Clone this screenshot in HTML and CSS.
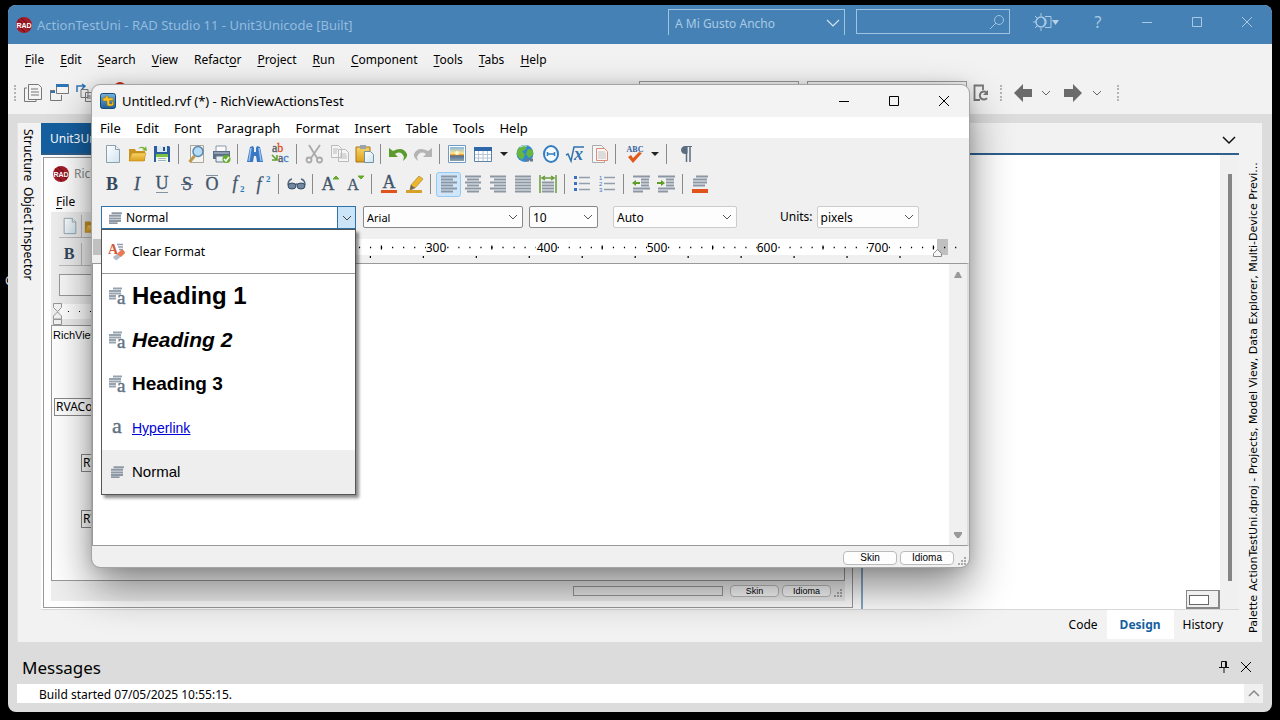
FILE: index.html
```html
<!DOCTYPE html>
<html lang="en">
<head>
<meta charset="utf-8">
<title>ActionTestUni - RAD Studio 11</title>
<link rel="stylesheet" href="styles.css">
</head>
<body>
<svg class="defs" aria-hidden="true">
  <defs>
    <linearGradient id="gPage" x1="0" y1="0" x2="1" y2="1"><stop offset="0" stop-color="#fff"/><stop offset="1" stop-color="#cfe3ee"/></linearGradient>
    <linearGradient id="gGold" x1="0" y1="0" x2="0" y2="1"><stop offset="0" stop-color="#f8d468"/><stop offset="1" stop-color="#dca01c"/></linearGradient>
    <linearGradient id="gSky" x1="0" y1="0" x2="0" y2="1"><stop offset="0" stop-color="#86b7e6"/><stop offset=".45" stop-color="#f8e58c"/><stop offset=".58" stop-color="#f08a1c"/><stop offset=".62" stop-color="#56708a"/><stop offset="1" stop-color="#8fa3b5"/></linearGradient>
    <linearGradient id="gBlue" x1="0" y1="0" x2="0" y2="1"><stop offset="0" stop-color="#74b3e0"/><stop offset="1" stop-color="#1c5f97"/></linearGradient>
    <symbol id="chev" viewBox="0 0 10 10"><path d="M1 3l4 4 4-4" fill="none" stroke="currentColor"/></symbol>
    <symbol id="min" viewBox="0 0 12 12"><path d="M1 6.500h10" stroke="currentColor"/></symbol>
    <symbol id="max" viewBox="0 0 12 12"><path d="M1.500 1.500h9v9h-9z" fill="none" stroke="currentColor"/></symbol>
    <symbol id="close" viewBox="0 0 12 12"><path d="M1 1l10 10M11 1L1 11" fill="none" stroke="currentColor"/></symbol>
    <symbol id="rad" viewBox="0 0 16 16"><circle cx="8" cy="8" r="8" fill="#a51c28"/><path d="M2 3l12 10M5 1l10 9M1 8l8 7" stroke="#5c1018"/><text x="8" y="10.500" text-anchor="middle" font-family="Liberation Sans" font-weight="bold" font-size="7" fill="#fff">RAD</text></symbol>
    <symbol id="page" viewBox="0 0 20 20"><path d="M3.500 1.500h9l4 4v13h-13z" fill="url(#gPage)" stroke="#8ba0ad"/><path d="M12.500 1.500v4h4" fill="#eef6fa" stroke="#8ba0ad"/></symbol>
    <symbol id="open" viewBox="0 0 20 20"><path d="M1 17V5h6l1 2h9v10z" fill="#c99320"/><path d="M1 17l3-8h14l-2 8z" fill="url(#gGold)" stroke="#c58e1c" stroke-width=".6"/><path d="M10 5q3-4 7-1l1-2 1 5-5-1 2-1q-3-2-6 0z" fill="#75b02c"/></symbol>
    <symbol id="lines" viewBox="0 0 16 14"><path d="M4 1.500h12M1 4.500h14M1 7.500h14M1 10.500h14M1 13h10" stroke="#8f99a6" stroke-width="2.300"/></symbol>
    <symbol id="para-a" viewBox="0 0 18 18"><path d="M5 1.500h9M1 4h12M1 6.500h12M1 9h7M1 11.500h7" stroke="#98a3b0" stroke-width="2"/><text x="9" y="17" font-family="Liberation Serif" font-size="19" font-weight="normal" font-style="normal" fill="#5d7183" stroke="#5d7183" stroke-width=".4">a</text></symbol>
    <symbol id="grip" viewBox="0 0 9 9"><path d="M6 0h2v2H6zM3 3h2v2H3zM6 3h2v2H6zM0 6h2v2H0zM3 6h2v2H3zM6 6h2v2H6z" fill="#aaa"/></symbol>
    <symbol id="tri" viewBox="0 0 10 10"><path d="M1 3h8L5 7z" fill="#222"/></symbol>
    <symbol id="bold" viewBox="0 0 20 20"><text x="9" y="16" text-anchor="middle" font-family="Liberation Serif" font-weight="bold" font-size="18" fill="#35485d">B</text></symbol>
  </defs>
</svg>
<span class="desktop-label">C</span>
<div class="ide">
  <header class="ide-title">
    <svg width="16" height="16"><use href="#rad"/></svg>
    <span class="caption">ActionTestUni - RAD Studio 11 - Unit3Unicode [Built]</span>
    <label class="pick layout-pick"><select aria-label="Desktop layout"><option>A Mi Gusto Ancho</option></select><svg width="16" height="16" viewBox="0 0 16 16"><path d="M2 5l6 6 6-6" fill="none" stroke="#d2e3f1" stroke-width="1.200"/></svg></label>
    <label class="pick ide-search"><input type="text" aria-label="Search"><svg width="16" height="16" viewBox="0 0 16 16"><circle cx="10" cy="6" r="4.500" fill="none" stroke="#9fc4e2"/><path d="M7 9L1 15" stroke="#9fc4e2"/></svg></label>
    <button class="theme" aria-label="Theme"><svg width="26" height="20" viewBox="0 0 26 20"><g fill="none" stroke="#a9cae4"><circle cx="8" cy="10" r="5" stroke-width="1.500"/><path d="M8 1v3M8 16v3M0 10h3M2 4l2 2M2 16l2-2M12 4.500h6v11h-6"/><path d="M9 5q6 5 0 10"/></g><path d="M19 8h7l-3.500 5z" fill="#b7d2e8"/></svg></button>
    <button class="help" aria-label="Help">?</button>
    <button aria-label="Minimize"><svg width="12" height="12"><use href="#min"/></svg></button>
    <button aria-label="Maximize"><svg width="12" height="12"><use href="#max"/></svg></button>
    <button aria-label="Close"><svg width="12" height="12"><use href="#close"/></svg></button>
  </header>
  <nav class="ide-menu">
    <button><u>F</u>ile</button><button><u>E</u>dit</button><button><u>S</u>earch</button><button><u>V</u>iew</button><button>Refact<u>o</u>r</button><button><u>P</u>roject</button><button><u>R</u>un</button><button><u>C</u>omponent</button><button><u>T</u>ools</button><button><u>T</u>abs</button><button><u>H</u>elp</button>
  </nav>
  <div class="ide-tools">
    <i class="handle"></i>
    <button aria-label="View unit"><svg width="20" height="20" viewBox="0 0 20 20"><g fill="#f4f4f4" stroke="#777"><path d="M4 5H1.500v13.500H13V16"/><path d="M5.500 1.500h10l3 3v12h-13z"/><path d="M8 6h7M8 9h8M8 12h8" /></g></svg></button>
    <button aria-label="View form"><svg width="20" height="20" viewBox="0 0 20 20"><path d="M7.500 1.500h12v9h-12z" fill="#f5f5f5" stroke="#777"/><path d="M7 1h12v3H7zM1 7h5v3H1z" fill="#2d75b6"/><path d="M6 7.500H1.500v10h11V12" fill="none" stroke="#777"/></svg></button>
    <button aria-label="Toggle form"><svg width="20" height="20" viewBox="0 0 20 20"><path d="M2 9V3h8M7 1l3 2-3 3" fill="none" stroke="#2d75b6" stroke-width="1.500"/><path d="M6 6.500h7v8H6zM10.500 9.500h7v9h-7z" fill="#eee" stroke="#777"/><path d="M12 13h4M12 15h4" stroke="#777"/></svg></button>
    <svg class="stop" width="12" height="12" viewBox="0 0 12 12"><circle cx="6" cy="6" r="6" fill="#c8281c"/></svg>
    <select class="target" aria-label="Platform"><option></option></select>
    <select class="target" aria-label="Device"><option></option></select>
    <button aria-label="Refresh devices"><svg width="20" height="20" viewBox="0 0 20 20"><path d="M10 17H4.500V2.500H13V7" fill="none" stroke="#777" stroke-width="1.800"/><path d="M17 10a4 4 0 1 0 0 5" fill="none" stroke="#777" stroke-width="2"/><path d="M18 7v5h-5z" fill="#777"/></svg></button>
    <i class="handle"></i>
    <button aria-label="Back"><svg width="20" height="20" viewBox="0 0 20 20"><path d="M1 10l9-9v5h9v8h-9v5z" fill="#6b6b6b"/></svg></button>
    <button class="slim" aria-label="Back history"><svg width="10" height="10"><use href="#chev"/></svg></button>
    <button class="wide" aria-label="Forward"><svg width="20" height="20" viewBox="0 0 20 20"><path d="M19 10l-9-9v5H1v8h9v5z" fill="#6b6b6b"/></svg></button>
    <button class="slimmer" aria-label="Forward history"><svg width="10" height="10"><use href="#chev"/></svg></button>
    <i class="handle"></i>
  </div>
  <main class="work">
    <aside class="rail left-rail"><span>Structure</span><span>Object Inspector</span></aside>
    <section class="center">
      <div class="file-tabs"><button class="file-tab">Unit3Unicode</button><button class="tab-list" aria-label="Open files"><svg width="14" height="10" viewBox="0 0 14 10"><path d="M1 2l6 6 6-6" fill="none" stroke="#111" stroke-width="1.500"/></svg></button></div>
      <div class="design-area">
        <div class="form">
          <div class="form-title"><svg width="16" height="16"><use href="#rad"/></svg><span>RichViewActionsTest</span></div>
          <div class="form-menu"><button><u>F</u>ile</button><button><u>E</u>dit</button></div>
          <div class="form-body">
            <div class="form-bar"><button aria-label="New"><svg width="18" height="18"><use href="#page"/></svg></button><button aria-label="Open"><svg width="18" height="18"><use href="#open"/></svg></button></div>
            <div class="form-bar"><button aria-label="Bold"><svg width="18" height="18"><use href="#bold"/></svg></button><button aria-label="Italic"></button></div>
            <input class="form-combo" type="text" aria-label="Style">
            <svg class="form-ruler" height="22" width="60" viewBox="0 0 60 22"><path d="M9 1h51v15H9z" fill="#fff"/><path d="M2.500.5h8v4l-4 4-4-4zM2.500 16v-3l4-4 4 4v3zM2.500 16.500h8v5h-8z" fill="#f4f4f4" stroke="#999"/><path d="M17 8h1v1h-1zM28 8h1v1h-1zM39 8h1v1h-1z"/></svg>
            <div class="form-editor"><p>RichViewEdit1</p><i class="comp-icon"></i><div class="comp first">RVAControlsPainter1</div><i class="comp-icon"></i><div class="comp">RVAPopupMenu</div><i class="comp-icon"></i><div class="comp">RVStyle1</div></div>
            <div class="form-status"><i class="progress"></i><button>Skin</button><button>Idioma</button><svg width="9" height="9"><use href="#grip"/></svg></div>
          </div>
        </div>
        <i class="guide"></i>
        <div class="blank"><button class="mini" aria-label="Form position"><i></i></button></div>
        <div class="scroller"><i></i></div>
      </div>
      <div class="view-tabs"><button>Code</button><button class="on">Design</button><button>History</button></div>
    </section>
    <aside class="rail right-rail"><span>Palette</span><span>ActionTestUni.dproj - Projects, Model View, Data Explorer, Multi-Device Previ...</span></aside>
  </main>
  <footer class="messages">
    <div class="msg-head"><h2>Messages</h2><button aria-label="Pin"><svg width="12" height="14" viewBox="0 0 12 14"><path d="M3.500 7.500v-6h5v6M7.500 1.500v6M1 7.500h10M6 8v5" fill="none" stroke="#111"/></svg></button><button aria-label="Close"><svg width="12" height="12"><use href="#close"/></svg></button></div>
    <div class="msg-list"><span>Build started 07/05/2025 10:55:15.</span><button aria-label="Scroll up"><svg width="12" height="10" viewBox="0 0 12 10"><path d="M1 7l5-5 5 5" fill="none" stroke="#888" stroke-width="1.500"/></svg></button></div>
  </footer>
</div>

<section class="dialog" aria-label="RichViewActionsTest">
  <header class="dlg-title">
    <svg width="16" height="16" viewBox="0 0 16 16"><rect x=".5" y=".5" width="15" height="15" rx="2" fill="url(#gBlue)" stroke="#174a74"/><path d="M3 5h2.500V3H8v2h5v2.500H9.500V11H12V8.500h1.500V12q-1 1-3 1H8.500Q7 13 7 11V8H3z" fill="#ffc31f" stroke="#9b6b10" stroke-width=".5"/></svg>
    <span>Untitled.rvf (*) - RichViewActionsTest</span>
    <button aria-label="Minimize"><svg width="12" height="12"><use href="#min"/></svg></button>
    <button aria-label="Maximize"><svg width="12" height="12"><use href="#max"/></svg></button>
    <button aria-label="Close"><svg width="12" height="12"><use href="#close"/></svg></button>
  </header>
  <nav class="dlg-menu"><button>File</button><button>Edit</button><button>Font</button><button>Paragraph</button><button>Format</button><button>Insert</button><button>Table</button><button>Tools</button><button>Help</button></nav>
  <div class="bar">
    <button aria-label="New"><svg viewBox="0 0 20 20"><use href="#page"/></svg></button>
    <button aria-label="Open"><svg viewBox="0 0 20 20"><use href="#open"/></svg></button>
    <button aria-label="Save"><svg viewBox="0 0 20 20"><path d="M1 2h15l1 1v15H1z" fill="#2c5da0"/><path d="M4 2h10v6H4z" fill="#d9e8f2"/><path d="M10 3h2v4h-2z" fill="#28537f"/><path d="M3 10h12v8H3z" fill="#f3fae9"/><path d="M3 10h12v3H3z" fill="#7dc142"/><path d="M5 14.500h8M5 16.500h8" stroke="#9bb3c4"/></svg></button>
    <i class="sep"></i>
    <button aria-label="Preview"><svg viewBox="0 0 20 20"><path d="M3.500 1.500h13v17h-13z" fill="#f3f3f0" stroke="#aaa79e"/><circle cx="11" cy="7.500" r="5" fill="#b4dcf6" stroke="#5c86ab" stroke-width="1.500"/><path d="M7.500 12l-5 6" stroke="#c09a4c" stroke-width="3"/></svg></button>
    <button aria-label="Print"><svg viewBox="0 0 20 20"><path d="M4 2h10v6H4z" fill="#fafafa" stroke="#8a98a6"/><path d="M1 7h17v8H1z" fill="#5a6e84"/><path d="M2 8h15v2H2z" fill="#8da0b3"/><path d="M4 12h10v6H4z" fill="#e8f0f6" stroke="#66788a"/><circle cx="14.500" cy="15" r="4" fill="#62ad2d"/><path d="M12 15l2 2 3-4" fill="none" stroke="#fff" stroke-width="1.500"/></svg></button>
    <i class="sep"></i>
    <button aria-label="Find"><svg viewBox="0 0 20 20"><path d="M4 3l3-1 1 2v4h2V4l1-2 3 1 3 15h-6l-1-6H8l-1 6H1z" fill="#3a78c4"/><path d="M5 4L3 17M13 4l2 13" stroke="#9cc4ee" stroke-width="1.500"/></svg></button>
    <button aria-label="Replace"><svg viewBox="0 0 20 20"><g font-family="Liberation Serif" font-size="12"><text x="1" y="8" fill="#4a5b6e" stroke="#4a5b6e" stroke-width=".3">a<tspan fill="#dc5020" stroke="#dc5020">b</tspan></text><text x="7" y="18" fill="#4a5b6e" stroke="#4a5b6e" stroke-width=".3">a<tspan fill="#3c7fd0" stroke="#3c7fd0">c</tspan></text></g><path d="M1 11l4 4M6 11v5H1" fill="none" stroke="#5c9c28" stroke-width="1.500"/></svg></button>
    <i class="sep"></i>
    <button aria-label="Cut"><svg viewBox="0 0 20 20"><g fill="none" stroke="#aaa" stroke-width="1.800"><path d="M4 1l8 13M15 1L6 14"/><circle cx="4" cy="16" r="2.500"/><circle cx="14.500" cy="16" r="2.500"/></g></svg></button>
    <button aria-label="Copy"><svg viewBox="0 0 20 20"><g fill="#f5f5f5" stroke="#bbb"><path d="M1.500 1.500h7l3 3v9h-10zM8.500 5.500h7l3 3v9h-10z"/><path d="M10 10h6M10 12h7M10 14h7M3 5h5M3 7h4M3 9h4"/></g></svg></button>
    <button aria-label="Paste"><svg viewBox="0 0 20 20"><path d="M1 3h14v15H1z" fill="url(#gGold)" stroke="#a87416"/><path d="M5 1h6v4H5z" fill="#99a4ae"/><path d="M9.500 7.500h6l3 3v8h-9z" fill="url(#gPage)" stroke="#6e93ac"/></svg></button>
    <i class="sep"></i>
    <button aria-label="Undo"><svg viewBox="0 0 20 20"><path d="M0 4v9h9l-3-3q6-4 9 3l-1 4q5-4 4-7-4-8-14-3z" fill="#5b9b2e"/></svg></button>
    <button aria-label="Redo"><svg viewBox="0 0 20 20"><path d="M18 4v9H9l3-3q-6-4-9 3l1 4q-5-4-4-7 4-8 14-3z" fill="#b4b4b4"/></svg></button>
    <i class="sep"></i>
    <button aria-label="Picture"><svg viewBox="0 0 20 20"><path d="M.5 1.500h17v17H.5z" fill="#fff" stroke="#6e9cc6"/><path d="M2 3h14v14H2z" fill="url(#gSky)"/><circle cx="9" cy="9" r="2" fill="#fff9d0"/></svg></button>
    <button aria-label="Table"><svg viewBox="0 0 20 20"><path d="M1.500 3.500h17v14h-17z" fill="#fff" stroke="#5c82a8"/><path d="M1 3h18v4H1z" fill="#2e67aa"/><path d="M2 10.500h16M2 14h16M5.500 7v10M10 7v10M14.500 7v10" stroke="#b4c6d8"/></svg></button>
    <button class="drop" aria-label="Table size"><svg viewBox="0 0 10 10"><use href="#tri"/></svg></button>
    <button aria-label="Hyperlink"><svg viewBox="0 0 20 20"><circle cx="10" cy="9.500" r="8.500" fill="#3189d4"/><path d="M4 4q4-4 8-2l-2 4-3 1 3 4-3 5Q1 13 2 7zM13 5l5 1v5l-4 3-3-4z" fill="#68b63c"/><path d="M5 3q4-2 7-1" stroke="#bfe4fa" fill="none"/><path d="M11 16h7" stroke="#6d7882" stroke-width="3" stroke-dasharray="3 1"/></svg></button>
    <button aria-label="Symbol"><svg viewBox="0 0 20 20"><ellipse cx="11" cy="10" rx="7" ry="8" fill="#f5fbff" stroke="#347dc3" stroke-width="2"/><path d="M7 10h8M7.500 8v4M14.500 8v4" stroke="#347dc3" stroke-width="1.500"/></svg></button>
    <button aria-label="Equation"><svg viewBox="0 0 20 20"><path d="M1 11l2-1 3 7L9 3h10" fill="none" stroke="#2e73b0" stroke-width="1.500"/><text x="9" y="16" font-family="Liberation Serif" font-style="italic" font-weight="bold" font-size="18" fill="#2e73b0">x</text></svg></button>
    <button aria-label="Page background"><svg viewBox="0 0 20 20"><path d="M2.500 1.500h9l3 3v14h-12z" fill="#f4f7f8" stroke="#aaa"/><path d="M6.500 4.500h8l3 3v9h-11z" fill="#fff6f3" stroke="#e08975"/><path d="M8 8h7M8 10h8M8 12h8M8 14h8" stroke="#b8c0c8"/></svg></button>
    <i class="sep"></i>
    <button aria-label="Spelling"><svg viewBox="0 0 20 20"><text x="11" y="8" text-anchor="middle" font-family="Liberation Serif" font-weight="bold" font-size="8" fill="#365f9e">ABC</text><path d="M4 13l3-2 2 3 6-6 3 1-9 10z" fill="#e05a1c"/></svg></button>
    <button class="drop" aria-label="Spelling options"><svg viewBox="0 0 10 10"><use href="#tri"/></svg></button>
    <i class="sep"></i>
    <button aria-label="Show marks"><svg viewBox="0 0 20 20"><path d="M17 2.500h-7a3.500 3.500 0 1 0 0 7h2V2.500" fill="#5a6c80" stroke="#5a6c80"/><path d="M11.500 2v16M15 2v16" stroke="#5a6c80" stroke-width="1.500"/></svg></button>
  </div>
  <div class="bar">
    <button aria-label="Bold"><svg viewBox="0 0 20 20"><use href="#bold"/></svg></button>
    <button aria-label="Italic"><svg viewBox="0 0 20 20"><text class="gl it" x="9" y="16">I</text></svg></button>
    <button aria-label="Underline"><svg viewBox="0 0 20 20"><text class="gl" x="9" y="15">U</text><path d="M3 18.500h12" stroke="#8391a0"/></svg></button>
    <button aria-label="Strikeout"><svg viewBox="0 0 20 20"><text class="gl" x="9" y="16">S</text><path d="M3 10.500h12" stroke="#5b6c7e"/></svg></button>
    <button aria-label="Overline"><svg viewBox="0 0 20 20"><text class="gl" x="9" y="16">O</text><path d="M3 1.500h12" stroke="#8391a0"/></svg></button>
    <button aria-label="Subscript"><svg viewBox="0 0 20 20"><text class="gl it" x="7" y="15">f</text><text class="idx" x="12" y="18">2</text></svg></button>
    <button aria-label="Superscript"><svg viewBox="0 0 20 20"><text class="gl it" x="6" y="16">f</text><text class="idx" x="13" y="8">2</text></svg></button>
    <i class="sep"></i>
    <button aria-label="Hidden text"><svg viewBox="0 0 20 20"><path d="M1 11q0-5 4-6M18 11q0-5-4-6M8 11q2-2 3 0" fill="none" stroke="#52657b" stroke-width="1.500"/><ellipse cx="5" cy="12" rx="4" ry="3" fill="#7187a2" stroke="#344964"/><ellipse cx="14" cy="12" rx="4" ry="3" fill="#7187a2" stroke="#344964"/></svg></button>
    <i class="sep"></i>
    <button aria-label="Grow font"><svg viewBox="0 0 20 20"><text class="gl" x="7" y="16">A</text><path d="M12 5l3-3 3 3z" fill="#67a92f" stroke="#67a92f"/></svg></button>
    <button aria-label="Shrink font"><svg viewBox="0 0 20 20"><text class="gl small" x="7" y="16">A</text><path d="M12 2l3 3 3-3z" fill="#67a92f" stroke="#67a92f"/></svg></button>
    <i class="sep"></i>
    <button aria-label="Text color"><svg viewBox="0 0 20 20"><text class="gl" x="9" y="14">A</text><path d="M1 16h16v3H1z" fill="#e0531c"/></svg></button>
    <button aria-label="Highlight"><svg viewBox="0 0 20 20"><path d="M6 11l8-9 4 3-8 9-5 2z" fill="#edb72c" stroke="#a88236" stroke-width=".7"/><path d="M6 11l4 3-5 2z" fill="#6a6660"/><path d="M1 16h16v3H1z" fill="#d5a12a"/></svg></button>
    <i class="sep"></i>
    <button class="pressed" aria-label="Align left"><svg viewBox="0 0 20 20"><path class="ln" d="M2 2.500h16M2 5.500h12M2 8.500h16M2 11.500h12M2 14.500h16M2 17.500h12"/></svg></button>
    <button aria-label="Center"><svg viewBox="0 0 20 20"><path class="ln" d="M1 2.500h16M3 5.500h12M1 8.500h16M3 11.500h12M1 14.500h16M3 17.500h12"/></svg></button>
    <button aria-label="Align right"><svg viewBox="0 0 20 20"><path class="ln" d="M1 2.500h16M5 5.500h12M1 8.500h16M5 11.500h12M1 14.500h16M5 17.500h12"/></svg></button>
    <button aria-label="Justify"><svg viewBox="0 0 20 20"><path class="ln" d="M1 2.500h16M1 5.500h16M1 8.500h16M1 11.500h16M1 14.500h16M1 17.500h16"/></svg></button>
    <button aria-label="Distribute"><svg viewBox="0 0 20 20"><path class="ln" d="M3 8.500h12M3 11.500h12M3 14.500h12M3 17.500h12"/><path d="M1 1v18M17 1v18M3 4h12M6 2L3 4l3 2M12 2l3 2-3 2" fill="none" stroke="#6a9c3c" stroke-width="1.500"/></svg></button>
    <i class="sep"></i>
    <button aria-label="Bullets"><svg viewBox="0 0 20 20"><path d="M1 2h3v3H1zM1 8h3v3H1zM1 14h3v3H1z" fill="#3b6fc4"/><path d="M6 3.500h11M6 9.500h11M6 15.500h11" stroke="#929eab" stroke-width="1.500"/></svg></button>
    <button aria-label="Numbering"><svg viewBox="0 0 20 20"><g font-family="Liberation Sans" font-size="6" fill="#3b6fc4"><text x="1" y="6">1</text><text x="1" y="12">2</text><text x="1" y="18">3</text></g><path d="M6 3.500h11M6 9.500h11M6 15.500h11" stroke="#929eab" stroke-width="1.500"/></svg></button>
    <i class="sep"></i>
    <button aria-label="Outdent"><svg viewBox="0 0 20 20"><path class="ln" d="M1 2.500h17M9 5.500h8M9 8.500h8M9 11.500h8M1 14.500h17M1 17.500h10"/><path d="M0 9l4-3v2h4v2H4v2z" fill="#5f9d27"/></svg></button>
    <button aria-label="Indent"><svg viewBox="0 0 20 20"><path class="ln" d="M1 2.500h17M9 5.500h8M9 8.500h8M9 11.500h8M1 14.500h17M1 17.500h10"/><path d="M8 9L4 6v2H0v2h4v2z" fill="#5f9d27"/></svg></button>
    <i class="sep"></i>
    <button aria-label="Paragraph color"><svg viewBox="0 0 20 20"><path class="ln" d="M5 2.500h12M2 5.500h14M2 8.500h14M2 11.500h12"/><path d="M1 15h16v4H1z" fill="#e0531c"/></svg></button>
  </div>
  <div class="combos">
    <div class="style-combo">
      <svg width="14" height="12"><use href="#lines"/></svg><input type="text" value="Normal" aria-label="Style"><button aria-label="Show styles"><svg width="10" height="10"><use href="#chev"/></svg></button>
      <div class="style-list">
        <button class="clear"><svg width="18" height="18" viewBox="0 0 18 18"><path d="M9 1.500h6M10 4h5M11 6.500h4" stroke="#929eaa" stroke-width="1.500"/><text x="0" y="11" font-family="Liberation Serif" font-weight="bold" font-size="14" fill="#d05c3c">A</text><path d="M5 14l8-6 4 2-8 7q-2 1-4-3z" fill="#b4bdca"/><path d="M9 11l4-4q3-1 4 3l-4 4z" fill="#eb7953"/></svg>Clear Format</button>
        <button class="h1"><svg width="18" height="18"><use href="#para-a"/></svg>Heading 1</button>
        <button class="h2"><svg width="18" height="18"><use href="#para-a"/></svg>Heading 2</button>
        <button class="h3"><svg width="18" height="18"><use href="#para-a"/></svg>Heading 3</button>
        <button class="lnk"><svg width="18" height="26" viewBox="0 0 18 26"><text x="4" y="18" font-family="Liberation Serif" font-size="22" fill="#5d7183" stroke="#5d7183" stroke-width=".4">a</text></svg><span>Hyperlink</span></button>
        <button class="nrm"><svg width="18" height="12"><use href="#lines"/></svg>Normal</button>
      </div>
    </div>
    <label class="pick font"><select aria-label="Font"><option>Arial</option></select><svg width="10" height="10"><use href="#chev"/></svg></label>
    <label class="pick size"><select aria-label="Font size"><option>10</option></select><svg width="10" height="10"><use href="#chev"/></svg></label>
    <label class="pick auto"><select aria-label="Color"><option>Auto</option></select><svg width="10" height="10"><use href="#chev"/></svg></label>
    <label class="units-label" for="units">Units:</label>
    <div class="pick units"><select id="units"><option>pixels</option></select><svg width="10" height="10"><use href="#chev"/></svg></div>
  </div>
  <svg class="ruler" height="24" width="876" viewBox="0 0 876 24">
    <path d="M9 0h836v16H9z" fill="#fff"/><path d="M1 0h8v16H1zM845 0h11v16h-11z" fill="#c0c0c0"/>
    <path d="M13 8.500h855" stroke="#000" stroke-width="1.500" stroke-dasharray="1.200 9.840"/>
    <path d="M68 8.500h778" stroke="#000" stroke-width="4" stroke-dasharray="1.200 109.200"/>
    <path d="M13 18h820" stroke="#000" stroke-width="2" stroke-dasharray="1.200 51.760"/>
    <path d="M334 2h20v13h-20zM444 2h20v13h-20zM555 2h20v13h-20zM665 2h20v13h-20zM776 2h20v13h-20z" fill="#fff"/>
    <g text-anchor="middle" font-family="Noto Sans" font-size="12"><text x="344" y="13">300</text><text x="455" y="13">400</text><text x="565" y="13">500</text><text x="675" y="13">600</text><text x="786" y="13">700</text></g>
    <path d="M841.500 17.500v-3l4-4 4 4v3z" fill="#f6f6f6" stroke="#888"/>
  </svg>
  <div class="editor"><textarea aria-label="Document"></textarea><div class="vscroll"><svg width="10" height="10" viewBox="0 0 10 10"><path d="M1 8h8L6 2H4z" fill="#999"/></svg><svg width="10" height="10" viewBox="0 0 10 10"><path d="M1 2h8v2L6 8H4L1 4z" fill="#999"/></svg></div></div>
  <footer class="status"><button>Skin</button><button>Idioma</button><svg width="9" height="9"><use href="#grip"/></svg></footer>
</section>
</body>
</html>
```
FILE: styles.css
```css
* { box-sizing: border-box; }
html, body { height: 100%; }
body { margin: 0; padding: 5px 8px 8px; background: #000; color: #000; font: 12px/16px "Noto Sans", sans-serif; overflow: hidden; position: relative; }
button, input, select, textarea { font: inherit; color: inherit; border: 0; padding: 0; margin: 0; background: none; border-radius: 0; outline: 0; }
select { appearance: none; }
svg { flex: none; display: block; }
.defs { position: absolute; width: 0; height: 0; }
.desktop-label { position: absolute; left: 5px; top: 273px; color: #ddd; }

.ide { position: relative; height: 100%; display: flex; flex-direction: column; background: #dcdcdc; border-radius: 8px; overflow: hidden; }
.ide-title { height: 39px; flex: none; display: flex; background: #4681b5; color: #a9cae4; padding: 4px 0 5px 8px; align-items: flex-start; }
.ide-title > svg { margin-top: 8px; }
.caption { flex: 1; margin: 8px 0 0 5px; font-size: 13px; color: #93bcdf; white-space: nowrap; }
.ide-title > button { width: 50px; height: 25px; display: grid; place-items: center; }
.ide-title .theme { width: 72px; }
.ide-title .help { width: 32px; margin-right: 8px; font-size: 16px; }
.pick { display: grid; }
.pick > * { grid-area: 1 / 1; }
.pick > svg { align-self: center; justify-self: end; margin-right: 4px; pointer-events: none; color: #555; }
.layout-pick { width: 177px; height: 26px; border: 1px solid #9fc4e2; border-bottom: 0; margin-right: 11px; }
.layout-pick select { padding: 2px 0 0 6px; }
.layout-pick > svg { margin-right: 3px; }
.ide-search { width: 154px; height: 25px; border: 1px solid #9fc4e2; }
.ide-search input { width: 100%; min-width: 0; }
.ide-menu { height: 32px; flex: none; background: #f2f2f2; display: flex; align-items: center; gap: 16px; padding-left: 17px; }
u { text-underline-offset: 2px; }
.ide-tools { height: 38px; flex: none; display: flex; align-items: center; background: #f2f2f2; padding: 0 153px 4px 5px; }
.ide-tools button { width: 26px; display: grid; place-items: center; color: #666; }
.ide-tools .slim { width: 20px; }
.ide-tools .wide { width: 34px; }
.ide-tools .slimmer { width: 14px; }
.handle { width: 3px; height: 16px; border: 1px dotted #b4b4b4; border-width: 0 2px 0 0; margin: 0 4px; }
.ide-tools > .handle:first-child { margin-left: 0; }
.stop { margin: 0 auto 10px 16px; }
.target { width: 160px; height: 24px; border: 1px solid #999; margin-right: 8px; }
.target + button { margin-left: -8px; }
.target + button + .handle { margin: 0 8px 0 6px; }
.ide-tools .slimmer + .handle { margin: 0 0 0 12px; }

.work { flex: 1; min-height: 0; display: flex; margin: 9px 9px 0; background: #f2f2f2; }
.rail { width: 24px; flex: none; writing-mode: vertical-rl; display: flex; align-items: flex-start; white-space: nowrap; }
.left-rail { gap: 6px; border-left: 1px solid #e3e3e3; padding: 6px 5px 0 0; }
.right-rail { transform: rotate(180deg); gap: 4px; padding: 9px 7px 0 0; border-left: 1px solid #ddd; font-family: "DejaVu Sans", sans-serif; font-size: 11px; }
.center { flex: 1; min-width: 0; display: flex; flex-direction: column; }
.file-tabs { height: 32px; flex: none; border-bottom: 2px solid #2f5f8c; display: flex; justify-content: space-between; }
.file-tab { width: 120px; background: #155f9f; color: #fff; text-align: left; padding: 2px 0 0 9px; }
.tab-list { padding: 4px 3px 0 0; }
.design-area { flex: 1; min-height: 0; display: flex; background: #fff; border-bottom: 1px solid #d8d8d8; }
.form { flex: 794; margin: 2px 8px 1px 2px; border: 1px solid #999; padding: 0 7px 6px; background: #fff; display: flex; flex-direction: column; min-height: 0; }
.form-title { height: 32px; display: flex; align-items: center; gap: 5px; padding-left: 2px; color: #888; }
.form-menu { height: 22px; display: flex; align-items: center; gap: 16px; padding: 2px 5px 0; }
.form-body { flex: 1; min-height: 0; background: #eee; display: flex; flex-direction: column; }
.form-bar { display: flex; height: 28px; padding: 3px 0 0 8px; }
.form-bar button { width: 23px; height: 23px; border: 1px solid #bbb; border-width: 0 1px 1px 0; display: grid; place-items: center; }
.form-combo { width: 200px; height: 22px; border: 1px solid #999; background: #f8f8f8; margin: 6px 0 7px 8px; flex: none; }
.form-editor { flex: 1; min-height: 0; border: 1px solid #999; background: #fff; }
.form-editor p { margin: 1px 1px 0; font: 11px/16px "Liberation Sans", sans-serif; }
.comp-icon { display: block; width: 28px; height: 34px; border: 1px solid #888; margin: 4px 0 0 39px; }
.form-editor p + .comp-icon { margin-top: 21px; }
.comp { width: max-content; height: 18px; border: 1px solid #888; margin-left: 29px; padding: 0 1px; }
.comp.first { margin-left: 2px; }
.form-status { height: 20px; flex: none; display: flex; align-items: center; justify-content: flex-end; gap: 3px; padding-right: 2px; }
.form-status button, .status button { border: 1px solid #bbb; border-radius: 4px; background: #fdfdfd; width: 49px; height: 12px; font: 9px/10px "Liberation Sans", sans-serif; }
.form-status svg { margin-top: 5px; }
.progress { width: 150px; height: 10px; border: 1px solid #999; margin-right: 4px; }
.guide { width: 2px; background: #85a8c8; }
.blank { flex: 357; display: flex; justify-content: flex-end; align-items: flex-end; }
.mini { width: 34px; height: 19px; background: #f0f0f0; border: 1px solid #888; border-width: 1px 2px 2px 1px; padding: 4px 2px; }
.mini i { display: block; width: 20px; height: 10px; background: #fff; border: 1px solid #666; }
.scroller { width: 19px; background: #f0f0f0; padding: 19px 7px 28px 8px; }
.scroller i { display: block; height: 100%; background: #858585; }
.view-tabs { height: 32px; flex: none; display: flex; justify-content: flex-end; align-items: flex-start; padding-right: 7px; }
.view-tabs button { height: 29px; padding: 0 9px; }
.view-tabs .on { width: 67px; padding: 0; background: #fff; color: #155f9f; font-weight: bold; }
.messages { padding: 0 9px 9px; flex: none; }
.msg-head { height: 42px; display: flex; align-items: center; gap: 10px; padding: 8px 11px 0 5px; }
.msg-head h2 { flex: 1; margin: 2px 0 0; font-size: 17px; font-weight: 400; }
.msg-list { height: 19px; background: #fff; display: flex; justify-content: space-between; align-items: center; padding-left: 22px; }
.msg-list span { padding-top: 2px; }
.msg-list button { width: 19px; height: 19px; background: #f0f0f0; display: grid; place-items: center; }

/* floating application window */
.dialog { position: absolute; left: 92px; right: 311px; top: 85px; bottom: 153px; display: flex; flex-direction: column; background: #f0f0f0; border-radius: 8px; outline: 1px solid #a4a4a4; box-shadow: 0 20px 44px rgba(0,0,0,.48), 0 0 14px rgba(0,0,0,.14); }
.dlg-title { height: 32px; flex: none; display: flex; align-items: center; background: #f3f3f3; border-radius: 8px 8px 0 0; padding-left: 8px; }
.dlg-title span { flex: 1; margin-left: 6px; font-size: 13px; }
.dlg-title button { width: 50px; height: 32px; display: grid; place-items: center; }
.dlg-menu { height: 21px; flex: none; background: #fff; display: flex; align-items: center; gap: 15px; padding: 1px 0 0 8px; font-size: 13px; }
.bar { height: 30px; flex: none; display: flex; align-items: center; padding: 2px 0 0 8px; }
.bar button { width: 25px; height: 25px; display: grid; place-items: center; }
.bar button svg { width: 20px; height: 20px; overflow: visible; }
.bar .drop { width: 17px; }
.bar .drop svg { width: 10px; height: 10px; }
.bar .pressed { background: #cfe6fa; border: 1px solid #93c9f2; border-radius: 3px; }
.sep { width: 1px; height: 20px; background: #8a8a8a; margin: 0 5px 0 3px; }
.ln { stroke: #8b97a4; stroke-width: 2; }
.gl { font: 18px "Liberation Serif", serif; text-anchor: middle; fill: #41546a; stroke: #41546a; stroke-width: .3; }
.gl.it { font-style: italic; }
.gl.small { font-size: 16px; }
.idx { font: bold 9px "Liberation Serif", serif; fill: #247bc0; }
.combos { height: 40px; flex: none; display: flex; align-items: flex-start; padding: 8px 0 0 9px; }
.style-combo { position: relative; width: 255px; height: 23px; display: flex; align-items: center; background: #fff; border: 1px solid #3072a8; padding-left: 6px; margin-right: 7px; }
.style-combo input { flex: 1; min-width: 0; margin-left: 4px; }
.style-combo > button { width: 18px; align-self: stretch; background: #cce4f7; border-left: 1px solid #3072a8; display: grid; place-items: center; color: #444; }
.style-list { position: absolute; z-index: 2; left: -1px; right: -1px; top: 22px; background: #fff; border: 1px solid #555; box-shadow: 3px 3px 3px rgba(0,0,0,.45); }
.style-list button { width: 100%; height: 44px; display: flex; align-items: center; gap: 6px; padding-left: 6px; font-family: "Liberation Sans", sans-serif; }
.style-list .clear { border-bottom: 1px solid #999; font-family: "Noto Sans", sans-serif; }
.style-list .h1 { font-size: 24px; font-weight: bold; }
.style-list .h2 { font-size: 21px; font-weight: bold; font-style: italic; }
.style-list .h3 { font-size: 19px; font-weight: bold; }
.style-list .lnk { font-size: 14px; color: #0000d8; text-decoration: underline; }
.style-list .nrm { font-size: 15px; background: #eee; }
.combos .pick { height: 22px; background: #fdfdfd; border: 1px solid #ccc; border-radius: 2px; }
.combos select { padding: 1px 0 0 3px; width: 100%; }
.combos .font { width: 160px; border-color: #888; margin-right: 6px; font-size: 11px; }
.combos .size { width: 69px; border-color: #888; margin-right: 15px; }
.combos .auto { width: 124px; margin-right: 43px; }
.units-label { margin: 3px 4px 0 0; }
.combos .units { width: 102px; }
.ruler { margin-top: 1px; }
.editor { flex: 1; min-height: 0; display: flex; background: #fff; border: 1px solid #999; border-width: 1px 2px 1px 1px; border-right-color: #ddd; }
.editor textarea { flex: 1; resize: none; }
.vscroll { width: 18px; background: #f0f0f0; display: flex; flex-direction: column; justify-content: space-between; align-items: center; padding: 6px 0 5px; }
.status { height: 21px; flex: none; display: flex; align-items: center; justify-content: flex-end; gap: 3px; padding: 2px 2px 0 0; }
.status button { width: 54px; height: 14px; font-size: 10px; line-height: 12px; }
.status svg { align-self: flex-end; margin: 0 0 1px 1px; }
```
